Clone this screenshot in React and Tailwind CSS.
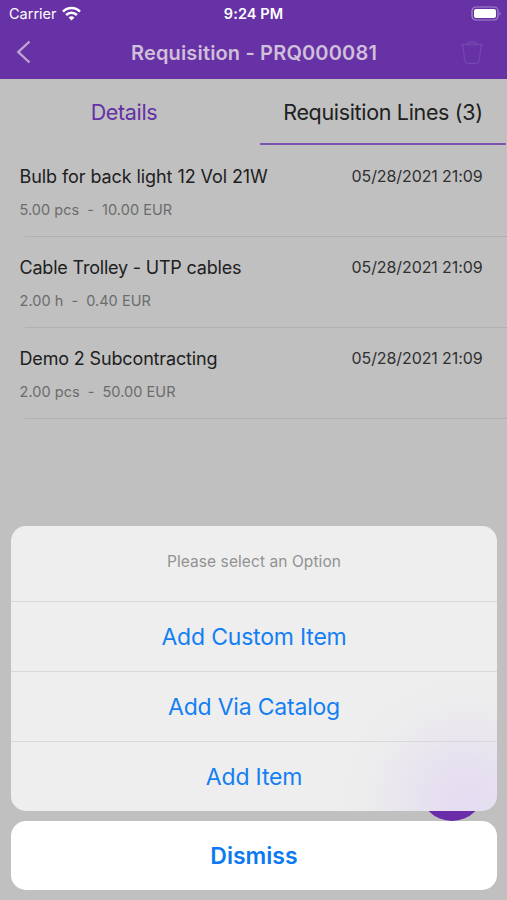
const lines = [
  { name: 'Bulb for back light 12 Vol 21W', qty: '5.00 pcs', price: '10.00 EUR', date: '05/28/2021 21:09', tracking: 'tracking-[-0.08px]' },
  { name: 'Cable Trolley - UTP cables', qty: '2.00 h', price: '0.40 EUR', date: '05/28/2021 21:09', tracking: 'tracking-[-0.2px]' },
  { name: 'Demo 2 Subcontracting', qty: '2.00 pcs', price: '50.00 EUR', date: '05/28/2021 21:09', tracking: 'tracking-[-0.15px]' },
];

const options = ['Add Custom Item', 'Add Via Catalog', 'Add Item'];

function StatusBar() {
  return (
    <div className="grid h-[27px] grid-cols-3 items-center px-[9px] text-white">
      <div className="flex items-center gap-[5px]">
        <span className="text-[14.5px] leading-[28px]">Carrier</span>
        <svg className="-mt-px" width="19" height="15" viewBox="0 0 19 15" fill="none" stroke="white" strokeWidth="2.6">
          <path d="M1 5.6C5.8.8 13.2.8 18 5.6" />
          <path d="M4.1 9C7.2 5.9 11.8 5.9 14.9 9" />
          <path d="M9.5 14.4 6.6 11.4C8.2 9.9 10.8 9.9 12.4 11.4Z" fill="white" stroke="none" />
        </svg>
      </div>
      <span className="text-center text-[14.5px] font-semibold leading-[28px] tracking-[0.08px]">9:24 PM</span>
      <svg className="-mr-[4px] -mt-px justify-self-end" width="31" height="15" viewBox="0 0 31 15">
        <rect x="1" y="1" width="26" height="13" rx="4" fill="none" stroke="#a58acb" strokeWidth="1.2" />
        <rect x="3" y="3" width="22" height="9" rx="2" fill="white" />
        <path d="M28.5 5.2Q30.5 7.5 28.5 9.8Z" fill="#a58acb" />
      </svg>
    </div>
  );
}

function NavBar() {
  return (
    <div className="grid h-[52px] grid-cols-[1fr_auto_1fr] items-center pl-[16px] pr-[15px]">
      <svg className="-mt-[2px]" width="15" height="24" viewBox="0 0 15 24" fill="none" stroke="#c0a8cf" strokeWidth="2.3">
        <path d="M13.5 1.5 2.3 12 13.5 22.5" />
      </svg>
      <h1 className="text-[20px] font-semibold leading-[51px] tracking-[0.16px] text-[#d0bfd9]">Requisition - PRQ000081</h1>
      <svg className="-mt-px mr-[9px] justify-self-end" width="22" height="24" viewBox="0 0 22 24" fill="none" stroke="#7746b0" strokeWidth="1.3" strokeLinejoin="round">
        <path d="M0 3.5H22M6.500 3.200Q7 1 9 1H13Q15 1 15.500 3.200M2 4 3.500 18.500Q4 22.500 7.500 22.500H14.500Q18 22.500 18.500 18.500L20 4" />
      </svg>
    </div>
  );
}

function LineRow({ line }) {
  return (
    <li className="flex h-[91.1px] flex-col">
      <div className="flex grow flex-col pl-[19.5px] pr-[24.5px] pt-[18px]">
        <div className="flex items-center justify-between leading-[26px] text-[#202020]">
          <span className={`text-[18px] ${line.tracking}`}>{line.name}</span>
          <span className="-mt-[2px] text-[16px] tracking-[-0.1px] text-[#303030]">{line.date}</span>
        </div>
        <div className="mt-[10px] flex gap-[8px] text-[14.5px] leading-[20px] tracking-[0.05px] text-[#6c6c6c]">
          <span>{line.qty}</span>
          <span>-</span>
          <span>{line.price}</span>
        </div>
      </div>
      <div className="ml-[25px] h-px bg-[#b0b0b0]" />
    </li>
  );
}

function ActionSheet() {
  return (
    <div className="absolute bottom-[10px] left-[11px] flex w-[486px] flex-col gap-[10px]">
      <div className="overflow-hidden rounded-[15px] bg-[#eeeeee] bg-[radial-gradient(circle_at_455px_275px,#e4dcf0_0px,#e6e0f0_35px,#e9e6ee_65px,#ecebed_95px,#eeeeee_130px)] text-center">
        <p className="h-[74.5px] text-[15.5px] leading-[71px] tracking-[0.08px] text-[#929292]">Please select an Option</p>
        {options.map((option) => (
          <button key={option} className="block h-[70px] w-full border-t border-[#d8d8d8] text-[23px] leading-[71px] tracking-[-0.2px] text-[#147ff3]">
            {option}
          </button>
        ))}
      </div>
      <button className="h-[69.5px] rounded-[15px] bg-white text-[23px] font-semibold leading-[71px] text-[#0c79f2]">Dismiss</button>
    </div>
  );
}

export default function App() {
  return (
    <div className="relative h-[900px] w-[507px] overflow-hidden bg-[#c0c0c0] font-['Inter','Liberation_Sans',sans-serif]">
      <header className="bg-[#6732a6]">
        <StatusBar />
        <NavBar />
      </header>
      <nav className="flex h-[66.5px] text-[21.5px] leading-[66px] tracking-[-0.33px]">
        <div className="w-[248px] text-center text-[#6330a5]">Details</div>
        <div className="ml-[12px] h-[66px] w-[246px] border-b-2 border-[#7d55af] text-center text-[#202020]">Requisition Lines (3)</div>
      </nav>
      <ul>
        {lines.map((line) => (
          <LineRow key={line.name} line={line} />
        ))}
      </ul>
      <div className="absolute left-[420px] top-[757px] size-[64px] rounded-full bg-[#6a2ca8]" />
      <ActionSheet />
    </div>
  );
}
